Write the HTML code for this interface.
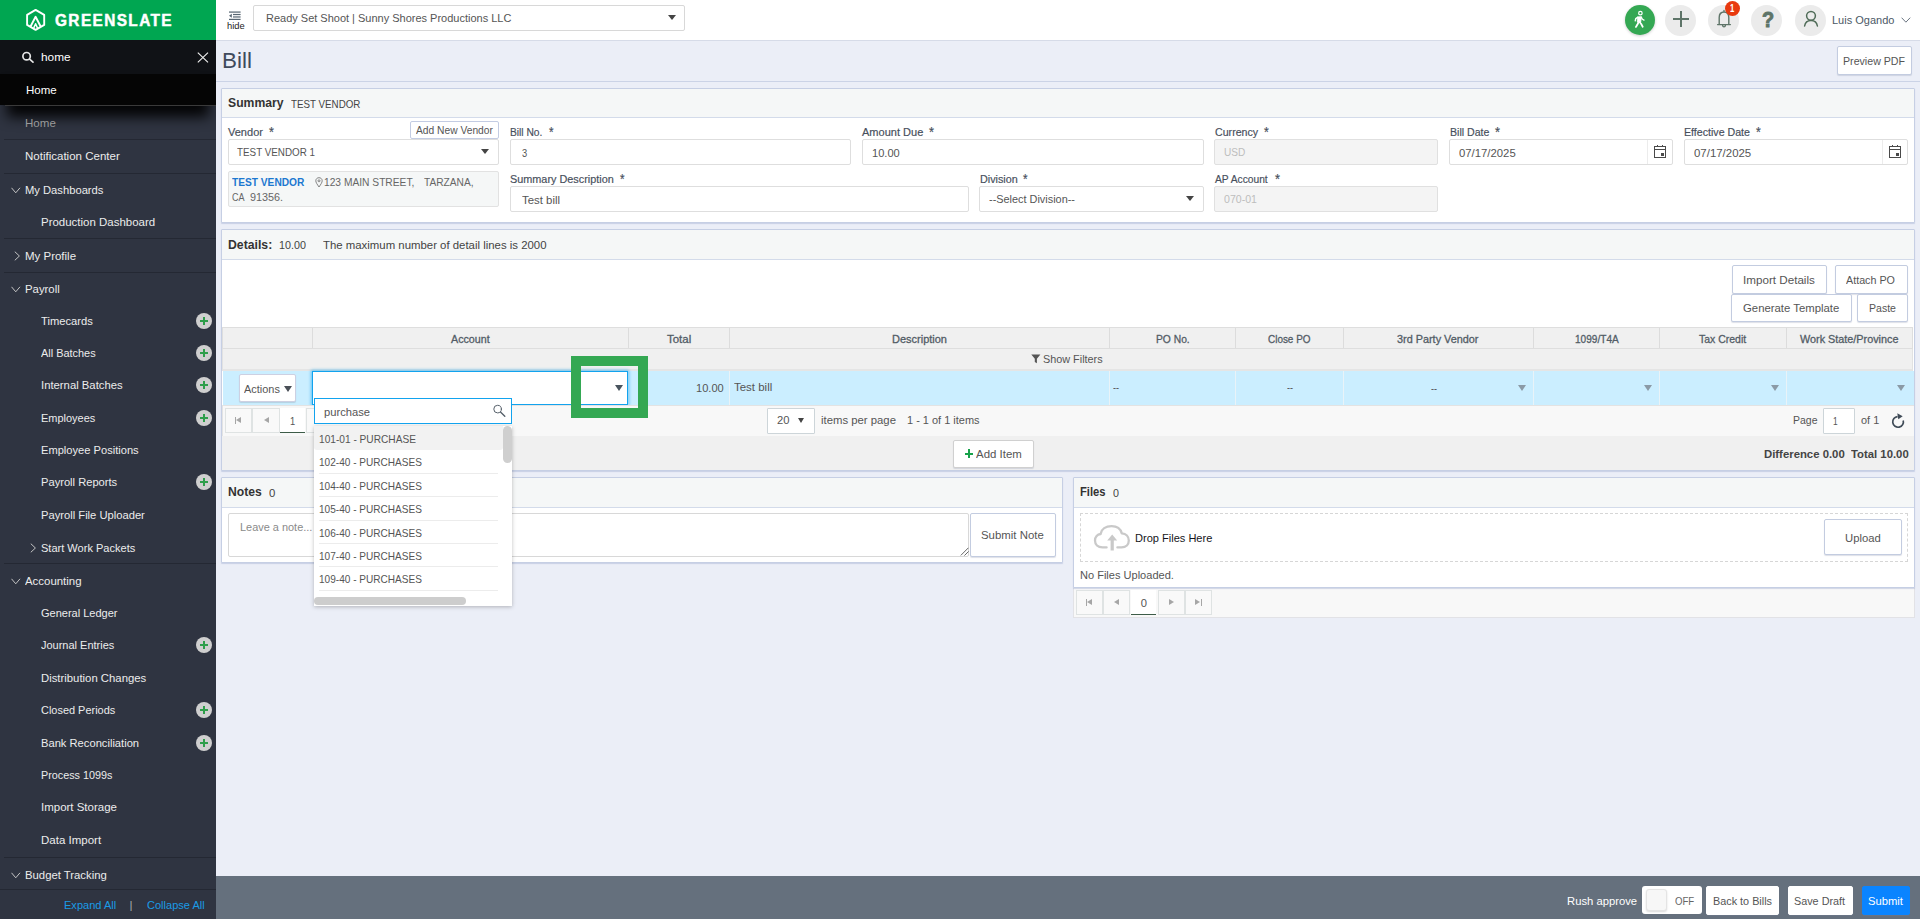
<!DOCTYPE html>
<html lang="en"><head><meta charset="utf-8"><title>Bill</title>
<style>
*{box-sizing:border-box;margin:0;padding:0}
html,body{width:1920px;height:919px;overflow:hidden}
body{font-family:"Liberation Sans",sans-serif;font-size:11.2px;color:#555;background:#ebeef7;position:relative;line-height:16px}
.a{position:absolute}
.t{position:absolute;white-space:nowrap;transform-origin:0 50%}
#side{position:absolute;left:0;top:0;width:216px;height:919px;background:#2f3441;color:#ececec;font-size:11.5px;overflow:hidden}
#side .sep{position:absolute;left:4px;width:212px;height:1px;background:#242833}
#side .plus{position:absolute;left:196px;width:16px;height:16px;border-radius:50%;background:#cfcfcf}
#side .plus:before{content:"";position:absolute;left:4.3px;top:7px;width:7.4px;height:2px;background:#2e9e4a}
#side .plus:after{content:"";position:absolute;left:7px;top:4.3px;width:2px;height:7.4px;background:#2e9e4a}
#top{position:absolute;left:216px;top:0;width:1704px;height:41px;background:#fff;border-bottom:1px solid #d6dbe8}
.circ{position:absolute;border-radius:50%;background:#ebebeb}
.btn{position:absolute;background:#fff;border:1px solid #c3cce0;border-radius:2px;box-shadow:0 1px 1px rgba(120,130,160,.25)}
.panel{position:absolute;background:#fff;border:1px solid #c6cfe4;border-radius:1px;box-shadow:0 1px 1px rgba(150,165,205,.4)}
.phead{position:absolute;left:0;top:0;right:0;background:#f5f7f7;border-bottom:1px solid #d3dbea}
.inp{position:absolute;background:#fff;border:1px solid #dedede;border-radius:2px}
.inp.dis{background:#f4f4f4;border-color:#e0e0e0}
.arr{position:absolute;width:0;height:0;border-left:4px solid transparent;border-right:4px solid transparent;border-top:5.5px solid #444}
.arr.g{border-top-color:#8b9aa6}
.pg{position:absolute;background:#f9f9f9;border:1px solid #dfe3e3;height:25px}
.tri-l{position:absolute;width:0;height:0;border-top:3.5px solid transparent;border-bottom:3.5px solid transparent;border-right:5.2px solid #a6a6a6}
.tri-r{position:absolute;width:0;height:0;border-top:3.5px solid transparent;border-bottom:3.5px solid transparent;border-left:5.2px solid #a6a6a6}
.bar{position:absolute;width:1.3px;height:7px;background:#a6a6a6}
.lsep{position:absolute;left:319px;width:179px;height:1px;background:#ececec}
</style></head>
<body>
<div id="side">
<div class="a" style="left:0;top:0;width:216px;height:40px;background:#00a651"></div>
<svg class="a" style="left:24px;top:7px" width="24" height="26" viewBox="24 7 24 26" fill="none" stroke="#fff" stroke-width="1.9" stroke-linejoin="round" stroke-linecap="round">
<path d="M35.6 9.9 L44.2 14.9 L44.2 24.9 L35.6 29.9 L27.1 24.9 L27.1 14.9 Z"/>
<path d="M30.8 26 L35.6 16.8 L40.4 26"/>
<path d="M33.9 27.6 L35.6 23.8 L37.3 27.6" stroke-width="1.5"/>
</svg>
<span class="t" style="left:54.60px;top:13px;font-size:15.6px;line-height:16px;transform:scaleX(0.9880);letter-spacing:1.4px;font-weight:bold;color:#fff;-webkit-text-stroke:.45px #fff">GREENSLATE</span>
<div class="a" style="left:0;top:40px;width:216px;height:34px;background:#101216"></div>
<svg class="a" style="left:21px;top:51px" width="14" height="13" viewBox="0 0 14 13" fill="none" stroke="#e6e6e6" stroke-width="1.7" stroke-linecap="round"><circle cx="5.6" cy="5.2" r="3.7"/><path d="M8.6 8.2 L12 11.2"/></svg>
<span class="t" style="left:40.80px;top:49px;font-size:11.5px;line-height:16px;transform:scaleX(1.0292);color:#fff">home</span>
<svg class="a" style="left:197px;top:51.5px" width="12" height="11" viewBox="0 0 12 11" fill="none" stroke="#f2f2f2" stroke-width="1.1"><path d="M0.8 0.6 L11 10.4 M11 0.6 L0.8 10.4"/></svg>
<div class="a" style="left:12px;top:84px;width:192px;height:21px;background:#050505;box-shadow:0 7px 13px 5px rgba(0,0,0,.92)"></div>
<div class="a" style="left:0;top:74px;width:216px;height:31px;background:#050505"></div>
<div class="a" style="left:5px;top:105px;width:211px;height:1px;background:#3a3a3a"></div>
<span class="t" style="left:26.20px;top:82px;font-size:11.5px;line-height:16px;transform:scaleX(1.0007);color:#fff">Home</span>
<span class="t" style="left:25.10px;top:115px;font-size:11.5px;line-height:16px;transform:scaleX(1.0040);color:#9a9a9a">Home</span>
<span class="t" style="left:25.10px;top:148px;font-size:11.5px;line-height:16px;transform:scaleX(1.0014);color:#ececec">Notification Center</span>
<span class="t" style="left:25.10px;top:182px;font-size:11.5px;line-height:16px;transform:scaleX(0.9736);color:#ececec">My Dashboards</span>
<svg class="a" style="left:11px;top:186.50px" width="10" height="7" viewBox="0 0 10 7" fill="none" stroke="#c4c4c4" stroke-width="1"><path d="M0.5 0.8 L4.75 5.8 L9 0.8"/></svg>
<span class="t" style="left:41.30px;top:214px;font-size:11.5px;line-height:16px;transform:scaleX(0.9970);color:#ececec">Production Dashboard</span>
<span class="t" style="left:25.10px;top:248px;font-size:11.5px;line-height:16px;transform:scaleX(0.9985);color:#ececec">My Profile</span>
<svg class="a" style="left:13.5px;top:251.00px" width="7" height="10" viewBox="0 0 7 10" fill="none" stroke="#c4c4c4" stroke-width="1"><path d="M0.8 0.7 L5.4 5 L0.8 9.3"/></svg>
<span class="t" style="left:25.10px;top:281px;font-size:11.5px;line-height:16px;transform:scaleX(0.9871);color:#ececec">Payroll</span>
<svg class="a" style="left:11px;top:285.50px" width="10" height="7" viewBox="0 0 10 7" fill="none" stroke="#c4c4c4" stroke-width="1"><path d="M0.5 0.8 L4.75 5.8 L9 0.8"/></svg>
<span class="t" style="left:41.30px;top:313px;font-size:11.5px;line-height:16px;transform:scaleX(0.9720);color:#ececec">Timecards</span>
<div class="plus" style="top:313.00px"></div>
<span class="t" style="left:41.30px;top:345px;font-size:11.5px;line-height:16px;transform:scaleX(0.9502);color:#ececec">All Batches</span>
<div class="plus" style="top:345.00px"></div>
<span class="t" style="left:41.12px;top:377px;font-size:11.5px;line-height:16px;transform:scaleX(0.9823);color:#ececec">Internal Batches</span>
<div class="plus" style="top:377.00px"></div>
<span class="t" style="left:41.30px;top:410px;font-size:11.5px;line-height:16px;transform:scaleX(0.9538);color:#ececec">Employees</span>
<div class="plus" style="top:410.00px"></div>
<span class="t" style="left:41.30px;top:442px;font-size:11.5px;line-height:16px;transform:scaleX(0.9670);color:#ececec">Employee Positions</span>
<span class="t" style="left:41.30px;top:474px;font-size:11.5px;line-height:16px;transform:scaleX(0.9688);color:#ececec">Payroll Reports</span>
<div class="plus" style="top:474.00px"></div>
<span class="t" style="left:41.30px;top:507px;font-size:11.5px;line-height:16px;transform:scaleX(0.9728);color:#ececec">Payroll File Uploader</span>
<span class="t" style="left:41.30px;top:540px;font-size:11.5px;line-height:16px;transform:scaleX(0.9593);color:#ececec">Start Work Packets</span>
<svg class="a" style="left:29.5px;top:543.00px" width="7" height="10" viewBox="0 0 7 10" fill="none" stroke="#c4c4c4" stroke-width="1"><path d="M0.8 0.7 L5.4 5 L0.8 9.3"/></svg>
<span class="t" style="left:25.10px;top:573px;font-size:11.5px;line-height:16px;transform:scaleX(0.9937);color:#ececec">Accounting</span>
<svg class="a" style="left:11px;top:577.50px" width="10" height="7" viewBox="0 0 10 7" fill="none" stroke="#c4c4c4" stroke-width="1"><path d="M0.5 0.8 L4.75 5.8 L9 0.8"/></svg>
<span class="t" style="left:41.30px;top:605px;font-size:11.5px;line-height:16px;transform:scaleX(0.9577);color:#ececec">General Ledger</span>
<span class="t" style="left:41.00px;top:637px;font-size:11.5px;line-height:16px;transform:scaleX(0.9551);color:#ececec">Journal Entries</span>
<div class="plus" style="top:637.00px"></div>
<span class="t" style="left:41.30px;top:670px;font-size:11.5px;line-height:16px;transform:scaleX(0.9855);color:#ececec">Distribution Changes</span>
<span class="t" style="left:41.30px;top:702px;font-size:11.5px;line-height:16px;transform:scaleX(0.9516);color:#ececec">Closed Periods</span>
<div class="plus" style="top:702.00px"></div>
<span class="t" style="left:41.30px;top:735px;font-size:11.5px;line-height:16px;transform:scaleX(0.9711);color:#ececec">Bank Reconciliation</span>
<div class="plus" style="top:735.00px"></div>
<span class="t" style="left:41.30px;top:767px;font-size:11.5px;line-height:16px;transform:scaleX(0.9382);color:#ececec">Process 1099s</span>
<span class="t" style="left:41.10px;top:799px;font-size:11.5px;line-height:16px;transform:scaleX(0.9977);color:#ececec">Import Storage</span>
<span class="t" style="left:41.30px;top:832px;font-size:11.5px;line-height:16px;transform:scaleX(1.0003);color:#ececec">Data Import</span>
<span class="t" style="left:25.10px;top:867px;font-size:11.5px;line-height:16px;transform:scaleX(0.9841);color:#ececec">Budget Tracking</span>
<svg class="a" style="left:11px;top:871.50px" width="10" height="7" viewBox="0 0 10 7" fill="none" stroke="#c4c4c4" stroke-width="1"><path d="M0.5 0.8 L4.75 5.8 L9 0.8"/></svg>
<div class="sep" style="top:139px"></div>
<div class="sep" style="top:173px"></div>
<div class="sep" style="top:238px"></div>
<div class="sep" style="top:272px"></div>
<div class="sep" style="top:563px"></div>
<div class="sep" style="top:857px"></div>
<div class="a" style="left:0;top:889px;width:216px;height:30px;background:#2f3441;border-top:1px solid #242833"></div>
<span class="t" style="left:64.30px;top:897px;font-size:11.5px;line-height:16px;transform:scaleX(0.9610);color:#1a9be6">Expand All</span>
<span class="t" style="left:129.40px;top:897px;font-size:11.5px;line-height:16px;color:#aaa">|</span>
<span class="t" style="left:146.50px;top:897px;font-size:11.5px;line-height:16px;transform:scaleX(0.9606);color:#1a9be6">Collapse All</span>
</div>
<div id="top"></div>
<svg class="a" style="left:228px;top:10.7px" width="14" height="9.4" viewBox="0 0 14 10" preserveAspectRatio="none" fill="#596773"><rect x="1" y="0.5" width="11.6" height="1.3"/><rect x="5" y="3.1" width="7.6" height="1.3"/><rect x="5" y="5.7" width="7.6" height="1.3"/><rect x="1" y="8.3" width="11.6" height="1.3"/><path d="M3.8 2.9 L3.8 7.2 L1 5.05 Z"/></svg>
<span class="t" style="left:227.20px;top:18px;font-size:9.8px;line-height:16px;transform:scaleX(0.9542);color:#222">hide</span>
<div class="inp" style="left:253px;top:5px;width:432px;height:26px;border-color:#d8d8d8"></div>
<span class="t" style="left:266.00px;top:10px;font-size:11.2px;line-height:16px;transform:scaleX(0.9821);color:#555">Ready Set Shoot | Sunny Shores Productions LLC</span>
<div class="arr" style="left:668px;top:15px"></div>
<div class="circ" style="left:1625px;top:5px;width:30px;height:30px;background:#34a853;box-shadow:0 1px 3px rgba(0,0,0,.2)"></div>
<svg class="a" style="left:1630px;top:9px" width="20" height="20" viewBox="1630 9 20 20" fill="none" stroke="#fff" stroke-linecap="round" stroke-linejoin="round"><circle cx="1640.4" cy="13.2" r="1.75" stroke-width="1.2"/><path d="M1637.6 17 L1641.4 16.8 L1640.6 22.2 L1637.8 22 Z" fill="#fff" stroke-width="1"/><path d="M1639.6 22 L1641.2 24 L1642.7 26.7" stroke-width="1.8"/><path d="M1638.6 22 L1637.4 24.6 L1635.9 26.9" stroke-width="1.8"/><path d="M1641.2 17.2 L1642.4 19.2 L1644 20.1" stroke-width="1.3"/><path d="M1637.8 17.2 L1635.7 18.6 L1635.2 20.9" stroke-width="1.3"/></svg>
<div class="circ" style="left:1665px;top:4.5px;width:31px;height:31px"></div>
<div class="a" style="left:1673.3px;top:18.2px;width:15.4px;height:1.8px;background:#5e7468"></div>
<div class="a" style="left:1680.1px;top:11.2px;width:1.8px;height:15.6px;background:#5e7468"></div>
<div class="circ" style="left:1708px;top:4.5px;width:31px;height:31px"></div>
<svg class="a" style="left:1716px;top:9px" width="16" height="20" viewBox="0 0 16 20" fill="none" stroke="#5e7468" stroke-width="1.4" stroke-linecap="round" stroke-linejoin="round"><path d="M1.6 15.6 L14.4 15.6 M3.2 15.4 L3.2 8.6 C3.2 5.2 5.2 3 8 3 C10.8 3 12.8 5.2 12.8 8.6 L12.8 15.4 M8 3 L8 1.4 M6.6 16.4 C6.8 18.4 9.2 18.4 9.4 16.4"/></svg>
<div class="circ" style="left:1725px;top:1px;width:15px;height:15px;background:#e8390e"></div>
<span class="t" style="left:1730.30px;top:0px;font-size:11px;line-height:16px;transform:scaleX(0.7000);font-weight:bold;color:#fff">1</span>
<div class="circ" style="left:1751px;top:4.5px;width:31px;height:31px"></div>
<span class="t" style="left:1762.40px;top:8px;font-size:21.5px;line-height:24px;transform:scaleX(0.9250);font-weight:bold;color:#5e7468;-webkit-text-stroke:.9px #5e7468">?</span>
<div class="circ" style="left:1795px;top:4.5px;width:31px;height:31px"></div>
<svg class="a" style="left:1803px;top:10px" width="16" height="18" viewBox="0 0 16 18" fill="none" stroke="#4f6b57" stroke-width="1.5" stroke-linecap="round"><circle cx="8" cy="5.8" r="4.4"/><path d="M1.6 16 C2.2 12.4 4.6 10.6 8 10.6 C11.4 10.6 13.8 12.4 14.4 16"/></svg>
<span class="t" style="left:1832.10px;top:12px;font-size:11.2px;line-height:16px;transform:scaleX(0.9838);color:#4b5866">Luis Ogando</span>
<svg class="a" style="left:1900.5px;top:16.6px" width="10" height="7" viewBox="0 0 10 7" fill="none" stroke="#6a7480" stroke-width="1"><path d="M0.6 0.7 L4.9 5.2 L9.2 0.7"/></svg>
<span class="t" style="left:222.28px;top:47px;font-size:22px;line-height:28px;transform:scaleX(1.0182);color:#3f4a5c">Bill</span>
<div class="a" style="left:216px;top:81px;width:1704px;height:1px;background:#cbd3e6"></div>
<div class="btn" style="left:1837px;top:46px;width:75px;height:29px;"></div>
<span class="t" style="left:1843.30px;top:53px;font-size:11.2px;line-height:16px;transform:scaleX(0.9505);color:#555">Preview PDF</span>
<div class="panel" style="left:221px;top:88px;width:1694px;height:135px"><div class="phead" style="height:29px"></div></div>
<span class="t" style="left:228.20px;top:95px;font-size:12.6px;line-height:16px;transform:scaleX(0.9679);font-weight:bold;color:#333">Summary</span>
<span class="t" style="left:290.50px;top:96px;font-size:11.2px;line-height:16px;transform:scaleX(0.8744);color:#444">TEST VENDOR</span>
<span class="t" style="left:228.10px;top:124px;font-size:11.2px;line-height:16px;transform:scaleX(0.9851);color:#474f5c;-webkit-text-stroke:.18px #474f5c">Vendor</span>
<span class="t" style="left:268.70px;top:124px;font-size:14px;line-height:16px;transform:scaleX(0.9000);color:#474f5c;-webkit-text-stroke:.18px #474f5c">*</span>
<div class="btn" style="left:410px;top:121px;width:89px;height:18px;box-shadow:none;border-color:#c3cce3"></div>
<span class="t" style="left:415.60px;top:123px;font-size:10.2px;line-height:16px;transform:scaleX(1.0057);color:#555">Add New Vendor</span>
<div class="inp" style="left:228px;top:139px;width:271px;height:26px"></div>
<span class="t" style="left:237.15px;top:144px;font-size:11.2px;line-height:16px;transform:scaleX(0.8791);color:#555">TEST VENDOR 1</span>
<div class="arr" style="left:481.4px;top:149px"></div>
<div class="inp" style="left:228px;top:171px;width:271px;height:36px;background:#f5f7f7;border-color:#e2e2e2"></div>
<span class="t" style="left:232.00px;top:174px;font-size:11.2px;line-height:16px;transform:scaleX(0.9090);font-weight:bold;color:#1c78d0">TEST VENDOR</span>
<svg class="a" style="left:314.5px;top:177px" width="8" height="11" viewBox="0 0 8 11" fill="none" stroke="#777" stroke-width="0.9"><path d="M4 10 C2 7 0.8 5.4 0.8 3.8 C0.8 2 2.2 0.7 4 0.7 C5.8 0.7 7.2 2 7.2 3.8 C7.2 5.4 6 7 4 10 Z"/><circle cx="4" cy="3.8" r="1"/></svg>
<span class="t" style="left:324.25px;top:174px;font-size:11.2px;line-height:16px;transform:scaleX(0.9140);color:#666">123 MAIN STREET,</span>
<span class="t" style="left:424.25px;top:174px;font-size:11.2px;line-height:16px;transform:scaleX(0.9102);color:#666">TARZANA,</span>
<span class="t" style="left:232.00px;top:189px;font-size:11.2px;line-height:16px;transform:scaleX(0.8085);color:#666">CA</span>
<span class="t" style="left:250.00px;top:189px;font-size:11.2px;line-height:16px;transform:scaleX(0.9675);color:#666">91356.</span>
<span class="t" style="left:510.20px;top:124px;font-size:11.2px;line-height:16px;transform:scaleX(0.9143);color:#474f5c;-webkit-text-stroke:.18px #474f5c">Bill No.</span>
<span class="t" style="left:549.25px;top:124px;font-size:14px;line-height:16px;transform:scaleX(0.8333);color:#474f5c;-webkit-text-stroke:.18px #474f5c">*</span>
<div class="inp" style="left:510px;top:139px;width:341px;height:26px"></div>
<span class="t" style="left:521.75px;top:145px;font-size:11.2px;line-height:16px;transform:scaleX(0.8333);color:#555">3</span>
<span class="t" style="left:862.20px;top:124px;font-size:11.2px;line-height:16px;transform:scaleX(0.9852);color:#474f5c;-webkit-text-stroke:.18px #474f5c">Amount Due</span>
<span class="t" style="left:928.75px;top:124px;font-size:14px;line-height:16px;transform:scaleX(0.9167);color:#474f5c;-webkit-text-stroke:.18px #474f5c">*</span>
<div class="inp" style="left:862px;top:139px;width:342px;height:26px"></div>
<span class="t" style="left:871.75px;top:145px;font-size:11.2px;line-height:16px;transform:scaleX(0.9901);color:#555">10.00</span>
<span class="t" style="left:1214.50px;top:124px;font-size:11.2px;line-height:16px;transform:scaleX(0.9500);color:#474f5c;-webkit-text-stroke:.18px #474f5c">Currency</span>
<span class="t" style="left:1263.75px;top:124px;font-size:14px;line-height:16px;transform:scaleX(0.8750);color:#474f5c;-webkit-text-stroke:.18px #474f5c">*</span>
<div class="inp dis" style="left:1214px;top:139px;width:224px;height:26px"></div>
<span class="t" style="left:1224.25px;top:144px;font-size:11.2px;line-height:16px;transform:scaleX(0.9027);color:#bdbdbd">USD</span>
<span class="t" style="left:1449.50px;top:124px;font-size:11.2px;line-height:16px;transform:scaleX(0.9472);color:#474f5c;-webkit-text-stroke:.18px #474f5c">Bill Date</span>
<span class="t" style="left:1494.50px;top:124px;font-size:14px;line-height:16px;transform:scaleX(0.9167);color:#474f5c;-webkit-text-stroke:.18px #474f5c">*</span>
<div class="inp" style="left:1449px;top:139px;width:224px;height:26px"></div>
<div class="a" style="left:1647px;top:140px;width:1px;height:24px;background:#ececec"></div>
<span class="t" style="left:1459.25px;top:145px;font-size:11.2px;line-height:16px;transform:scaleX(1.0131);color:#555">07/17/2025</span>
<span class="t" style="left:1684.25px;top:124px;font-size:11.2px;line-height:16px;transform:scaleX(0.9499);color:#474f5c;-webkit-text-stroke:.18px #474f5c">Effective Date</span>
<span class="t" style="left:1755.75px;top:124px;font-size:14px;line-height:16px;transform:scaleX(0.8750);color:#474f5c;-webkit-text-stroke:.18px #474f5c">*</span>
<div class="inp" style="left:1684px;top:139px;width:224px;height:26px"></div>
<div class="a" style="left:1882px;top:140px;width:1px;height:24px;background:#ececec"></div>
<span class="t" style="left:1693.75px;top:145px;font-size:11.2px;line-height:16px;transform:scaleX(1.0221);color:#555">07/17/2025</span>
<svg class="a" style="left:1653px;top:144px" width="14" height="15" viewBox="0 0 14 15" shape-rendering="crispEdges" fill="none" stroke="#4a4a4a" stroke-width="1"><rect x="1.5" y="2.5" width="11" height="11"/><path d="M1.5 5.5 L12.5 5.5"/><rect x="4" y="1" width="1.4" height="2" fill="#4a4a4a" stroke="none"/><rect x="9" y="1" width="1.4" height="2" fill="#4a4a4a" stroke="none"/><rect x="8" y="9" width="3" height="3" fill="#4a4a4a" stroke="none"/></svg>
<svg class="a" style="left:1888px;top:144px" width="14" height="15" viewBox="0 0 14 15" shape-rendering="crispEdges" fill="none" stroke="#4a4a4a" stroke-width="1"><rect x="1.5" y="2.5" width="11" height="11"/><path d="M1.5 5.5 L12.5 5.5"/><rect x="4" y="1" width="1.4" height="2" fill="#4a4a4a" stroke="none"/><rect x="9" y="1" width="1.4" height="2" fill="#4a4a4a" stroke="none"/><rect x="8" y="9" width="3" height="3" fill="#4a4a4a" stroke="none"/></svg>
<span class="t" style="left:510.20px;top:171px;font-size:11.2px;line-height:16px;transform:scaleX(0.9704);color:#474f5c;-webkit-text-stroke:.18px #474f5c">Summary Description</span>
<span class="t" style="left:620.00px;top:171px;font-size:14px;line-height:16px;transform:scaleX(0.8333);color:#474f5c;-webkit-text-stroke:.18px #474f5c">*</span>
<div class="inp" style="left:510px;top:186px;width:459px;height:26px"></div>
<span class="t" style="left:521.75px;top:192px;font-size:11.2px;line-height:16px;transform:scaleX(1.0185);color:#555">Test bill</span>
<span class="t" style="left:979.50px;top:171px;font-size:11.2px;line-height:16px;transform:scaleX(0.9629);color:#474f5c;-webkit-text-stroke:.18px #474f5c">Division</span>
<span class="t" style="left:1023.00px;top:171px;font-size:14px;line-height:16px;transform:scaleX(0.8333);color:#474f5c;-webkit-text-stroke:.18px #474f5c">*</span>
<div class="inp" style="left:979px;top:186px;width:225px;height:26px"></div>
<span class="t" style="left:988.75px;top:191px;font-size:11.2px;line-height:16px;transform:scaleX(0.9741);color:#555">--Select Division--</span>
<div class="arr" style="left:1186px;top:196px"></div>
<span class="t" style="left:1214.50px;top:171px;font-size:11.2px;line-height:16px;transform:scaleX(0.9141);color:#474f5c;-webkit-text-stroke:.18px #474f5c">AP Account</span>
<span class="t" style="left:1274.50px;top:171px;font-size:14px;line-height:16px;transform:scaleX(0.9167);color:#474f5c;-webkit-text-stroke:.18px #474f5c">*</span>
<div class="inp dis" style="left:1214px;top:186px;width:224px;height:26px"></div>
<span class="t" style="left:1224.25px;top:191px;font-size:11.2px;line-height:16px;transform:scaleX(0.9462);color:#bdbdbd">070-01</span>
<div class="panel" style="left:221px;top:229px;width:1694px;height:242px"><div class="phead" style="height:30px"></div></div>
<span class="t" style="left:228.20px;top:237px;font-size:12.6px;line-height:16px;transform:scaleX(0.9718);font-weight:bold;color:#333">Details:</span>
<span class="t" style="left:278.75px;top:237px;font-size:11.2px;line-height:16px;transform:scaleX(0.9631);color:#444">10.00</span>
<span class="t" style="left:323.00px;top:237px;font-size:11.2px;line-height:16px;transform:scaleX(1.0181);color:#444">The maximum number of detail lines is 2000</span>
<div class="btn" style="left:1732px;top:265px;width:95px;height:29px;"></div>
<span class="t" style="left:1742.71px;top:272px;font-size:11.2px;line-height:16px;transform:scaleX(1.0414);color:#555">Import Details</span>
<div class="btn" style="left:1835px;top:265px;width:73px;height:29px;"></div>
<span class="t" style="left:1846.25px;top:272px;font-size:11.2px;line-height:16px;transform:scaleX(0.9603);color:#555">Attach PO</span>
<div class="btn" style="left:1731px;top:294px;width:121px;height:28px;"></div>
<span class="t" style="left:1743.00px;top:300px;font-size:11.2px;line-height:16px;transform:scaleX(1.0140);color:#555">Generate Template</span>
<div class="btn" style="left:1857px;top:294px;width:51px;height:28px;"></div>
<span class="t" style="left:1868.75px;top:300px;font-size:11.2px;line-height:16px;transform:scaleX(0.9424);color:#555">Paste</span>
<div class="a" style="left:222px;top:327px;width:1691px;height:22px;background:#f0f0f0;border:1px solid #dedede"></div>
<div class="a" style="left:312px;top:328px;width:1px;height:20px;background:#dcdcdc"></div>
<span class="t" style="left:450.50px;top:331px;font-size:11.2px;line-height:16px;transform:scaleX(0.9561);color:#525c66;-webkit-text-stroke:.3px #525c66">Account</span>
<div class="a" style="left:628px;top:328px;width:1px;height:20px;background:#dcdcdc"></div>
<span class="t" style="left:667.20px;top:331px;font-size:11.2px;line-height:16px;transform:scaleX(1.0240);color:#525c66;-webkit-text-stroke:.3px #525c66">Total</span>
<div class="a" style="left:729px;top:328px;width:1px;height:20px;background:#dcdcdc"></div>
<span class="t" style="left:892.00px;top:331px;font-size:11.2px;line-height:16px;transform:scaleX(0.9823);color:#525c66;-webkit-text-stroke:.3px #525c66">Description</span>
<div class="a" style="left:1109px;top:328px;width:1px;height:20px;background:#dcdcdc"></div>
<span class="t" style="left:1155.70px;top:331px;font-size:11.2px;line-height:16px;transform:scaleX(0.9187);color:#525c66;-webkit-text-stroke:.3px #525c66">PO No.</span>
<div class="a" style="left:1235px;top:328px;width:1px;height:20px;background:#dcdcdc"></div>
<span class="t" style="left:1268.25px;top:331px;font-size:11.2px;line-height:16px;transform:scaleX(0.8874);color:#525c66;-webkit-text-stroke:.3px #525c66">Close PO</span>
<div class="a" style="left:1343px;top:328px;width:1px;height:20px;background:#dcdcdc"></div>
<span class="t" style="left:1397.00px;top:331px;font-size:11.2px;line-height:16px;transform:scaleX(0.9706);color:#525c66;-webkit-text-stroke:.3px #525c66">3rd Party Vendor</span>
<div class="a" style="left:1533px;top:328px;width:1px;height:20px;background:#dcdcdc"></div>
<span class="t" style="left:1574.50px;top:331px;font-size:11.2px;line-height:16px;transform:scaleX(0.9021);color:#525c66;-webkit-text-stroke:.3px #525c66">1099/T4A</span>
<div class="a" style="left:1659px;top:328px;width:1px;height:20px;background:#dcdcdc"></div>
<span class="t" style="left:1698.75px;top:331px;font-size:11.2px;line-height:16px;transform:scaleX(0.9366);color:#525c66;-webkit-text-stroke:.3px #525c66">Tax Credit</span>
<div class="a" style="left:1786px;top:328px;width:1px;height:20px;background:#dcdcdc"></div>
<span class="t" style="left:1800.00px;top:331px;font-size:11.2px;line-height:16px;transform:scaleX(0.9676);color:#525c66;-webkit-text-stroke:.3px #525c66">Work State/Province</span>
<div class="a" style="left:222px;top:349px;width:1691px;height:21.5px;background:#f0f0f0;border:1px solid #e2e2e2;border-top:none;border-bottom:2px solid #e5e5e5"></div>
<svg class="a" style="left:1030.5px;top:354px" width="10" height="10" viewBox="0 0 10 10" fill="#555"><path d="M0.3 0.6 L9.4 0.6 L5.9 4.8 L5.9 9.2 L3.8 8 L3.8 4.8 Z"/></svg>
<span class="t" style="left:1043.00px;top:351px;font-size:11.2px;line-height:16px;transform:scaleX(0.9685);color:#555">Show Filters</span>
<div class="a" style="left:223px;top:370.5px;width:1691px;height:34.5px;background:#cbeeff"></div>
<div class="a" style="left:312px;top:370.5px;width:1px;height:34.5px;background:#e9f3f8"></div>
<div class="a" style="left:628px;top:370.5px;width:1px;height:34.5px;background:#e9f3f8"></div>
<div class="a" style="left:729px;top:370.5px;width:1px;height:34.5px;background:#e9f3f8"></div>
<div class="a" style="left:1109px;top:370.5px;width:1px;height:34.5px;background:#e9f3f8"></div>
<div class="a" style="left:1235px;top:370.5px;width:1px;height:34.5px;background:#e9f3f8"></div>
<div class="a" style="left:1343px;top:370.5px;width:1px;height:34.5px;background:#e9f3f8"></div>
<div class="a" style="left:1533px;top:370.5px;width:1px;height:34.5px;background:#e9f3f8"></div>
<div class="a" style="left:1659px;top:370.5px;width:1px;height:34.5px;background:#e9f3f8"></div>
<div class="a" style="left:1786px;top:370.5px;width:1px;height:34.5px;background:#e9f3f8"></div>
<div class="btn" style="left:239px;top:374px;width:56.5px;height:28px;border-color:#cdd0e2;box-shadow:0 1px 1px rgba(0,0,0,.12)"></div>
<span class="t" style="left:244.25px;top:381px;font-size:11.2px;line-height:16px;transform:scaleX(0.9773);color:#555">Actions</span>
<div class="arr" style="left:283.7px;top:386px;border-left-width:4.1px;border-right-width:4.1px;border-top-width:6px;border-top-color:#4a4f57"></div>
<div class="a" style="left:312px;top:370.5px;width:316px;height:34.5px;background:#fff;border:1px solid #12a3ee;border-radius:0;box-shadow:0 0 3px 1px rgba(18,163,238,.6)"></div>
<div class="arr" style="left:615px;top:384.7px;border-left-width:4.1px;border-right-width:4.1px;border-top-width:6px;border-top-color:#4a545e"></div>
<span class="t" style="left:696.25px;top:380px;font-size:11.2px;line-height:16px;transform:scaleX(0.9901);color:#555">10.00</span>
<span class="t" style="left:734.25px;top:379px;font-size:11.2px;line-height:16px;transform:scaleX(1.0253);color:#555">Test bill</span>
<span class="t" style="left:1113.25px;top:379px;font-size:11.2px;line-height:16px;transform:scaleX(0.8090);color:#555">--</span>
<span class="t" style="left:1287.00px;top:379px;font-size:11.2px;line-height:16px;transform:scaleX(0.8090);color:#555">--</span>
<span class="t" style="left:1430.75px;top:380px;font-size:11.2px;line-height:16px;transform:scaleX(0.8090);color:#555">--</span>
<div class="arr g" style="left:1517.7px;top:384.6px;border-left-width:4.1px;border-right-width:4.1px;border-top-width:6px"></div>
<div class="arr g" style="left:1644.2px;top:384.6px;border-left-width:4.1px;border-right-width:4.1px;border-top-width:6px"></div>
<div class="arr g" style="left:1770.7px;top:384.6px;border-left-width:4.1px;border-right-width:4.1px;border-top-width:6px"></div>
<div class="arr g" style="left:1897.2px;top:384.6px;border-left-width:4.1px;border-right-width:4.1px;border-top-width:6px"></div>
<div class="a" style="left:222px;top:405px;width:1692px;height:31.5px;background:#f8f8f8;border:1px solid #e3e3e3;border-right:none"></div>
<div class="pg" style="left:225px;top:408px;width:27px"></div>
<div class="bar" style="left:234.9px;top:417px"></div><div class="tri-l" style="left:236.1px;top:417px"></div>
<div class="pg" style="left:252px;top:408px;width:28px"></div>
<div class="tri-l" style="left:263.6px;top:417px"></div>
<div class="a" style="left:280px;top:408px;width:25px;height:25px;background:#fff;border-bottom:1.5px solid #3d5c48"></div>
<span class="t" style="left:290.00px;top:413px;font-size:11.2px;line-height:16px;transform:scaleX(0.8333);color:#555">1</span>
<div class="pg" style="left:306px;top:408px;width:8px;border-right:none"></div>
<div class="inp" style="left:767px;top:408px;width:47.5px;height:25.5px;border-color:#cdd5d9;border-radius:1px"></div>
<span class="t" style="left:777.00px;top:412px;font-size:11.2px;line-height:16px;transform:scaleX(1.0023);color:#555">20</span>
<div class="arr" style="left:797.5px;top:418px;border-left-width:3.8px;border-right-width:3.8px;border-top-width:5.5px"></div>
<span class="t" style="left:820.75px;top:412px;font-size:11.2px;line-height:16px;transform:scaleX(1.0131);color:#555">items per page</span>
<span class="t" style="left:907.00px;top:412px;font-size:11.2px;line-height:16px;transform:scaleX(0.9812);color:#555">1 - 1 of 1 items</span>
<span class="t" style="left:1792.50px;top:412px;font-size:11.2px;line-height:16px;transform:scaleX(0.9361);color:#555">Page</span>
<div class="inp" style="left:1822.5px;top:408px;width:32px;height:25.5px;border-color:#cdd5d9;border-radius:1px"></div>
<span class="t" style="left:1832.50px;top:413px;font-size:11.2px;line-height:16px;transform:scaleX(0.7500);color:#555">1</span>
<span class="t" style="left:1860.75px;top:412px;font-size:11.2px;line-height:16px;transform:scaleX(0.9762);color:#555">of 1</span>
<svg class="a" style="left:1890px;top:411px" width="16" height="18" viewBox="1890 411 16 18" fill="none" stroke="#3f4b57" stroke-width="1.7"><path d="M1903.2 420.4 A5.35 5.35 0 1 1 1897.6 416.55"/><path d="M1897.3 413.3 L1902.7 416.3 L1898.3 419.3 Z" fill="#3f4b57" stroke="none"/></svg>
<div class="a" style="left:222px;top:436px;width:1692px;height:34px;background:#f0f0f0"></div>
<div class="btn" style="left:953px;top:440px;width:80.5px;height:28px;border-color:#d0d0d0"></div>
<span class="t" style="left:975.75px;top:446px;font-size:11.2px;line-height:16px;transform:scaleX(1.0236);color:#555">Add Item</span>
<div class="a" style="left:964.7px;top:452.5px;width:8.6px;height:2.4px;background:#17a24a"></div><div class="a" style="left:967.8px;top:449.4px;width:2.4px;height:8.6px;background:#17a24a"></div>
<span class="t" style="left:1764.30px;top:446px;font-size:11.2px;line-height:16px;transform:scaleX(1.0142);font-weight:bold;color:#444">Difference 0.00</span>
<span class="t" style="left:1850.50px;top:446px;font-size:11.2px;line-height:16px;transform:scaleX(1.0128);font-weight:bold;color:#444">Total 10.00</span>
<div class="panel" style="left:221px;top:477px;width:842px;height:86px"><div class="phead" style="height:30px"></div></div>
<span class="t" style="left:228.40px;top:484px;font-size:12.6px;line-height:16px;transform:scaleX(0.9661);font-weight:bold;color:#333">Notes</span>
<span class="t" style="left:269.00px;top:485px;font-size:11.2px;line-height:16px;transform:scaleX(1.0167);color:#444">0</span>
<div class="inp" style="left:228px;top:513px;width:741px;height:43.5px;border-color:#d8d8d8"></div>
<span class="t" style="left:239.50px;top:519px;font-size:11.2px;line-height:16px;transform:scaleX(0.9775);color:#8a8a8a">Leave a note...</span>
<svg class="a" style="left:959.5px;top:547px" width="9" height="9" viewBox="0 0 9 9" fill="none" stroke="#555" stroke-width="0.9"><path d="M0.8 8.4 L8.4 0.8 M4.4 8.6 L8.6 4.4"/></svg>
<div class="btn" style="left:970px;top:513px;width:85.5px;height:43.5px;"></div>
<span class="t" style="left:981.25px;top:527px;font-size:11.2px;line-height:16px;transform:scaleX(1.0190);color:#555">Submit Note</span>
<div class="a" style="left:1073px;top:586px;width:842px;height:31.5px;background:#f8f8f8;border:1px solid #e2e2e6"></div>
<div class="panel" style="left:1073px;top:477px;width:842px;height:111px"><div class="phead" style="height:30px"></div></div>
<span class="t" style="left:1080.20px;top:484px;font-size:12.6px;line-height:16px;transform:scaleX(0.8904);font-weight:bold;color:#333">Files</span>
<span class="t" style="left:1112.50px;top:485px;font-size:11.2px;line-height:16px;transform:scaleX(0.9583);color:#444">0</span>
<div class="a" style="left:1080px;top:513px;width:828px;height:49px;border:1px dashed #d6d6d6"></div>
<svg class="a" style="left:1093px;top:524px" width="38" height="28" viewBox="0 0 38 28" fill="none" stroke="#c9c9c9" stroke-width="2.3" stroke-linecap="round" stroke-linejoin="round"><path d="M13.6 23.4 H9.5 C4.8 23.4 2 20.4 2 16.6 C2 13 4.4 10.4 7.6 10 C8.4 5.2 12.8 2.2 18.6 2.2 C23.8 2.2 27.6 5 28.8 9.4 C33 9.6 35.8 12.6 35.8 16.6 C35.8 20.6 33 23.4 28.6 23.4 H24.4"/><path d="M19.2 10.6 L24.2 16.6 L20.8 16.6 L20.8 26.6 L17.6 26.6 L17.6 16.6 L14.2 16.6 Z" fill="#c9c9c9" stroke="none"/></svg>
<span class="t" style="left:1135.20px;top:530px;font-size:11.4px;line-height:16px;transform:scaleX(0.9695);color:#151520">Drop Files Here</span>
<div class="btn" style="left:1824px;top:519px;width:78px;height:36px;"></div>
<span class="t" style="left:1845.40px;top:530px;font-size:11.2px;line-height:16px;transform:scaleX(1.0076);color:#555">Upload</span>
<span class="t" style="left:1080.00px;top:567px;font-size:11.2px;line-height:16px;transform:scaleX(0.9865);color:#555">No Files Uploaded.</span>
<div class="pg" style="left:1076.25px;top:590px;width:26.5px;height:24.5px"></div>
<div class="pg" style="left:1103.25px;top:590px;width:27px;height:24.5px"></div>
<div class="pg" style="left:1158.25px;top:590px;width:26.5px;height:24.5px"></div>
<div class="pg" style="left:1185px;top:590px;width:26.5px;height:24.5px"></div>
<div class="bar" style="left:1085.5px;top:598.5px"></div><div class="tri-l" style="left:1087px;top:598.5px"></div>
<div class="tri-l" style="left:1113.5px;top:598.5px"></div>
<div class="a" style="left:1130.5px;top:590px;width:25.5px;height:24.5px;background:#fff;border-bottom:1.5px solid #3d5c48"></div>
<span class="t" style="left:1140.75px;top:595px;font-size:11.2px;line-height:16px;transform:scaleX(1.0000);color:#555">0</span>
<div class="tri-r" style="left:1169px;top:598.5px"></div>
<div class="tri-r" style="left:1195px;top:598.5px"></div><div class="bar" style="left:1200.5px;top:598.5px"></div>
<div class="a" style="left:313.75px;top:425.5px;width:198px;height:180px;background:#fff;box-shadow:0 1px 4px rgba(0,0,0,.25)"></div>
<div class="a" style="left:314px;top:398px;width:198px;height:26px;background:#fff;border:1px solid #12a3ee;border-radius:0"></div>
<span class="t" style="left:324.25px;top:404px;font-size:11.2px;line-height:16px;transform:scaleX(0.9989);color:#555">purchase</span>
<svg class="a" style="left:492px;top:404px" width="14" height="14" viewBox="492 404 14 14" fill="none" stroke="#56606a" stroke-linecap="round"><circle cx="497.6" cy="409.1" r="3.8" stroke-width="1"/><path d="M500.5 412.1 L504.8 416.2" stroke-width="1.4"/></svg>
<div class="a" style="left:314px;top:426px;width:188.5px;height:24px;background:#f2f2f2;border-radius:0 0 3px 3px"></div>
<span class="t" style="left:319.25px;top:431px;font-size:11.2px;line-height:16px;transform:scaleX(0.9063);color:#555">101-01 - PURCHASE</span>
<span class="t" style="left:319.25px;top:454px;font-size:11.2px;line-height:16px;transform:scaleX(0.8996);color:#555">102-40 - PURCHASES</span>
<span class="t" style="left:319.25px;top:478px;font-size:11.2px;line-height:16px;transform:scaleX(0.8996);color:#555">104-40 - PURCHASES</span>
<span class="t" style="left:319.25px;top:501px;font-size:11.2px;line-height:16px;transform:scaleX(0.8996);color:#555">105-40 - PURCHASES</span>
<span class="t" style="left:319.25px;top:525px;font-size:11.2px;line-height:16px;transform:scaleX(0.8996);color:#555">106-40 - PURCHASES</span>
<span class="t" style="left:319.25px;top:548px;font-size:11.2px;line-height:16px;transform:scaleX(0.8996);color:#555">107-40 - PURCHASES</span>
<span class="t" style="left:319.25px;top:571px;font-size:11.2px;line-height:16px;transform:scaleX(0.8996);color:#555">109-40 - PURCHASES</span>
<div class="lsep" style="top:472.7px"></div>
<div class="lsep" style="top:496.2px"></div>
<div class="lsep" style="top:519.5px"></div>
<div class="lsep" style="top:543px"></div>
<div class="lsep" style="top:566.2px"></div>
<div class="lsep" style="top:589.7px"></div>
<div class="a" style="left:503px;top:426px;width:8.8px;height:37px;background:#cfcfcf;border-radius:4.4px"></div>
<div class="a" style="left:314.25px;top:597px;width:151.5px;height:8px;background:#cdcdcd;border-radius:4px"></div>
<div class="a" style="left:570.75px;top:356px;width:76.75px;height:62px;border:10px solid #34a853"></div>
<div class="a" style="left:216px;top:876px;width:1704px;height:43px;background:#65707d"></div>
<span class="t" style="left:1567.30px;top:893px;font-size:11.5px;line-height:16px;transform:scaleX(0.9789);color:#fff">Rush approve</span>
<div class="a" style="left:1642px;top:886px;width:60px;height:28px;background:#fff;border-radius:3px"></div>
<div class="a" style="left:1646.3px;top:889px;width:20.5px;height:21.5px;background:#f7f7f7;border:1px solid #e4e4e4;border-radius:3px;box-shadow:0 1px 2px rgba(0,0,0,.15)"></div>
<span class="t" style="left:1674.60px;top:893px;font-size:11.2px;line-height:16px;transform:scaleX(0.8609);color:#666">OFF</span>
<div class="btn" style="left:1706.3px;top:886px;width:72.7px;height:28.5px;border-color:#fff"></div>
<span class="t" style="left:1712.80px;top:893px;font-size:11.2px;line-height:16px;transform:scaleX(0.9684);color:#555">Back to Bills</span>
<div class="btn" style="left:1788.2px;top:886px;width:64.5px;height:28.5px;border-color:#fff"></div>
<span class="t" style="left:1794.30px;top:893px;font-size:11.2px;line-height:16px;transform:scaleX(0.9657);color:#555">Save Draft</span>
<div class="btn" style="left:1862px;top:886px;width:48px;height:28.5px;background:#0a84ff;border-color:#0a84ff"></div>
<span class="t" style="left:1868.10px;top:893px;font-size:11.6px;line-height:16px;transform:scaleX(0.9685);color:#fff">Submit</span>
</body></html>
